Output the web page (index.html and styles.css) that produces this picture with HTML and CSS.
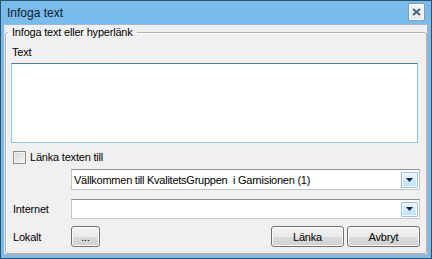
FILE: index.html
```html
<!DOCTYPE html>
<html lang="sv">
<head>
    <meta charset="UTF-8">
    <meta name="viewport" content="width=device-width, initial-scale=1.0">
    <title>Infoga text</title>
    <link rel="stylesheet" href="styles.css">
</head>
<body>
    <div class="window">
        <div class="titlebar">
            <span class="title">Infoga text</span>
            <button class="close">
                <svg width="9" height="8" viewBox="0 0 9 8">
                    <path d="M1 1 L8 7 M8 1 L1 7" stroke="#4f6275" stroke-width="2" fill="none"/>
                </svg>
            </button>
        </div>
        <div class="client">
            <fieldset class="group">
                <legend>Infoga text eller hyperlänk</legend>
                <div class="group-body">
                    <div class="field-label">Text</div>
                    <textarea class="textbox"></textarea>

                    <label class="check-row">
                        <span class="checkbox"></span>
                        Länka texten till
                    </label>

                    <div class="row row-link">
                        <span class="row-label"></span>
                        <div class="combo">
                            <span class="combo-text">Vällkommen till KvalitetsGruppen&nbsp; i Garnisionen (1)</span>
                            <span class="combo-btn">
                                <svg width="7" height="4" viewBox="0 0 7 4"><path d="M0 0 H7 L3.5 4 Z" fill="#14216a"/></svg>
                            </span>
                        </div>
                    </div>

                    <div class="row row-internet">
                        <span class="row-label">Internet</span>
                        <div class="combo">
                            <span class="combo-text"></span>
                            <span class="combo-btn">
                                <svg width="7" height="4" viewBox="0 0 7 4"><path d="M0 0 H7 L3.5 4 Z" fill="#14216a"/></svg>
                            </span>
                        </div>
                    </div>

                    <div class="row row-local">
                        <span class="row-label">Lokalt</span>
                        <button class="btn btn-browse">...</button>
                        <span class="spacer"></span>
                        <button class="btn btn-wide">Länka</button>
                        <button class="btn btn-wide">Avbryt</button>
                    </div>
                </div>
            </fieldset>
        </div>
    </div>
</body>
</html>
```

FILE: styles.css
```css
* {
    box-sizing: border-box;
}

body {
    margin: 0;
    font-family: "Liberation Sans", Arial, sans-serif;
    font-size: 11px;
    letter-spacing: -0.2px;
    color: #000;
    background: #fff;
}

.window {
    width: 432px;
    height: 259px;
    display: flex;
    flex-direction: column;
    border: 1px solid #2d5270;
    background: #79bcec;
}

.titlebar {
    height: 23px;
    flex: none;
    display: flex;
    align-items: flex-start;
    padding: 0 6px 0 6px;
}

.title {
    font-size: 12px;
    letter-spacing: 0;
    line-height: 23px;
    padding-top: 1px;
    color: #0b1a2a;
}

.close {
    margin-left: auto;
    margin-top: 2px;
    width: 17px;
    height: 18px;
    padding: 0;
    border: 1px solid #8a9cae;
    border-radius: 2px;
    background: linear-gradient(#f4f8fc, #dde9f4);
    box-shadow: inset 0 0 0 1px #fafcfe;
    display: flex;
    align-items: center;
    justify-content: center;
}

.client {
    flex: 1;
    margin: 0 3px 3px 3px;
    background: #f0f0f0;
    border: 1px solid #a9b6c1;
    border-left-color: #dfe6ec;
    display: flex;
}

.group {
    flex: 1;
    margin: 0;
    padding: 0 0 0 2px;
    border: 1px solid #b1b1b1;
    border-radius: 3px;
    box-shadow: inset 1px 1px 0 #fff;
}

.group legend {
    padding: 0 4px;
    line-height: 14px;
}

.field-label {
    margin-top: 6px;
    margin-left: 4px;
    line-height: 14px;
}

.textbox {
    display: block;
    margin: 4px 0 0 3px;
    width: 407px;
    height: 80px;
    padding: 0;
    resize: none;
    background: #fff;
    border: 1px solid #8fc6ec;
    border-top-color: #3f7db0;
}

.check-row {
    margin-top: 8px;
    margin-left: 5px;
    height: 13px;
    display: flex;
    align-items: center;
    gap: 4px;
    line-height: 13px;
}

.checkbox {
    width: 13px;
    height: 13px;
    border: 1px solid #8e8f8f;
    background: linear-gradient(135deg, #d6d6d6, #f7f7f7);
    box-shadow: inset 0 0 0 1px #f4f4f4;
}

.row {
    display: flex;
    align-items: center;
    margin-right: 6px;
}

.row-label {
    width: 63px;
    flex: none;
    padding-left: 5px;
}

.row-link {
    margin-top: 5px;
    height: 21px;
}

.row-internet {
    margin-top: 9px;
    height: 20px;
}

.row-local {
    margin-top: 7px;
    height: 21px;
}

.combo {
    flex: 1;
    height: 100%;
    display: flex;
    align-items: center;
    background: #fff;
    border: 1px solid #c3c6cb;
    border-top-color: #8d9096;
    padding-left: 2px;
}

.combo-text {
    white-space: nowrap;
    letter-spacing: -0.25px;
}

.combo-btn {
    margin-left: auto;
    margin-right: 1px;
    width: 17px;
    height: 16px;
    border: 1px solid #9cc3e2;
    border-radius: 1px;
    background: linear-gradient(#eef7fd, #b9e0f7);
    box-shadow: inset 0 0 0 1px #f3f9fd;
    display: flex;
    align-items: center;
    justify-content: center;
}

.row-internet .combo-btn {
    height: 15px;
}

.btn {
    height: 21px;
    padding: 0;
    font-family: inherit;
    font-size: 11px;
    letter-spacing: -0.2px;
    color: #000;
    border: 1px solid #707070;
    border-radius: 3px;
    background: linear-gradient(#f2f2f2 0%, #ebebeb 50%, #dddddd 50%, #cfcfcf 100%);
    box-shadow: inset 0 0 0 1px #fbfbfb;
}

.btn-browse {
    width: 29px;
}

.spacer {
    flex: 1;
}

.btn-wide {
    width: 73px;
    margin-left: 3px;
}
```
